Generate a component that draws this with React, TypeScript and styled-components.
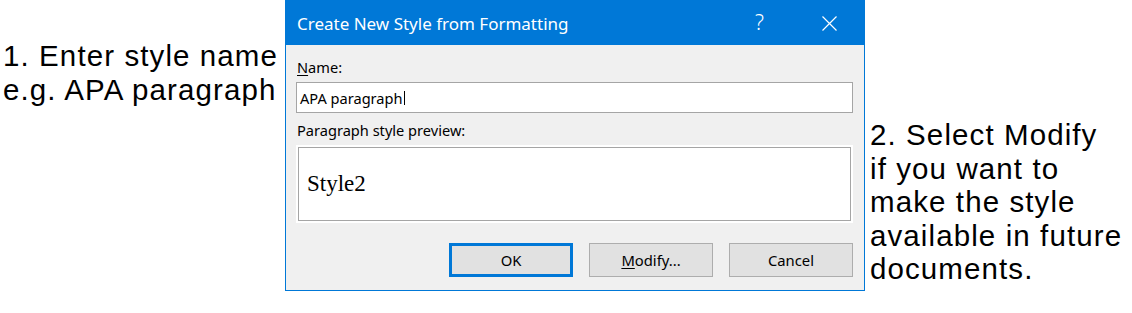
import * as React from "react";
import styled, { createGlobalStyle } from "styled-components";

const GlobalStyle = createGlobalStyle`
  html, body {
    margin: 0;
    padding: 0;
    background: #ffffff;
  }
`;

const App = () => {
  return (
    <Root>
      <GlobalStyle />
      <Note $top={39} $left={3} $width={285}>
        1. Enter style name
        <br />
        e.g. APA paragraph
      </Note>
      <Dialog>
        <TitleBar>
          <Title>Create New Style from Formatting</Title>
          <Help>?</Help>
          <CloseIcon width="15" height="15" viewBox="0 0 15 15">
            <path d="M0.5 0.5 L14.5 14.5 M14.5 0.5 L0.5 14.5" stroke="#ffffff" strokeWidth="1.2" />
          </CloseIcon>
        </TitleBar>
        <Body>
          <Label>
            <u>N</u>ame:
          </Label>
          <NameInput>
            APA paragraph
            <Caret />
          </NameInput>
          <Label $gap={7}>Paragraph style preview:</Label>
          <Preview>
            <PreviewInner>Style2</PreviewInner>
          </Preview>
          <Buttons>
            <Button $primary>OK</Button>
            <Button>
              <u>M</u>odify...
            </Button>
            <Button>Cancel</Button>
          </Buttons>
        </Body>
      </Dialog>
      <Note $top={118} $left={5}>
        2. Select Modify
        <br />
        if you want to
        <br />
        make the style
        <br />
        available in future
        <br />
        documents.
      </Note>
    </Root>
  );
};

export const Root = styled.div`
  display: flex;
  align-items: flex-start;
  width: 1132px;
  height: 313px;
  overflow: hidden;
`;

export const Note = styled.div<{ $top: number; $left: number; $width?: number }>`
  box-sizing: border-box;
  flex: none;
  width: ${({ $width }) => ($width ? `${$width}px` : "auto")};
  padding: ${({ $top, $left }) => `${$top}px 0 0 ${$left}px`};
  font-family: "Liberation Sans", Arial, sans-serif;
  font-size: 29.5px;
  line-height: 33.5px;
  letter-spacing: 1.1px;
  color: #000000;
  white-space: nowrap;
`;

export const Dialog = styled.section`
  box-sizing: border-box;
  flex: none;
  width: 580px;
  height: 291px;
  border: 1px solid #0078d7;
  border-top: none;
  background: #f0f0f0;
  display: flex;
  flex-direction: column;
  font-family: "Segoe UI", "Noto Sans", sans-serif;
  color: #000000;
`;

export const TitleBar = styled.header`
  display: flex;
  align-items: center;
  height: 45px;
  margin: 0 -1px;
  padding: 0 28px 0 12px;
  background: #0078d7;
  color: #ffffff;
`;

export const Title = styled.span`
  flex: 1;
  font-size: 17px;
  line-height: 45px;
  padding-top: 1px;
`;

export const Help = styled.span`
  font-size: 21px;
  font-weight: 300;
  line-height: 45px;
  margin-right: 58px;
`;

export const CloseIcon = styled.svg`
  display: block;
  margin-top: 1px;
`;

export const Body = styled.div`
  flex: 1;
  display: flex;
  flex-direction: column;
  padding: 12px 11px 0 10px;
`;

export const Label = styled.div<{ $gap?: number }>`
  font-size: 14.6px;
  line-height: 20px;
  margin-top: ${({ $gap }) => $gap ?? 0}px;
  padding-left: 1px;
  u {
    text-underline-offset: 2px;
  }
`;

export const NameInput = styled.div`
  box-sizing: border-box;
  display: flex;
  align-items: center;
  height: 31px;
  margin-top: 5px;
  padding: 0 0 0 3px;
  background: #ffffff;
  border: 1px solid #a5a5a5;
  font-size: 14.6px;
`;

export const Caret = styled.span`
  display: inline-block;
  width: 1px;
  height: 14px;
  margin-left: 1px;
  background: #000000;
`;

export const Preview = styled.div`
  box-sizing: border-box;
  height: 78px;
  margin-top: 5px;
  padding: 2px;
  background: #ffffff;
`;

export const PreviewInner = styled.div`
  box-sizing: border-box;
  height: 100%;
  padding: 23px 0 0 8px;
  border: 1px solid #a5a5a5;
  font-family: "Liberation Serif", "Times New Roman", serif;
  font-size: 23px;
  line-height: 26px;
`;

export const Buttons = styled.div`
  display: flex;
  justify-content: flex-end;
  gap: 16px;
  margin-top: 20px;
`;

export const Button = styled.div<{ $primary?: boolean }>`
  box-sizing: border-box;
  width: 124px;
  height: 34px;
  display: flex;
  align-items: center;
  justify-content: center;
  background: #e1e1e1;
  border: ${({ $primary }) => ($primary ? "3px solid #0078d7" : "1px solid #adadad")};
  font-size: 14.8px;
  u {
    text-underline-offset: 2px;
  }
`;

export default App;
